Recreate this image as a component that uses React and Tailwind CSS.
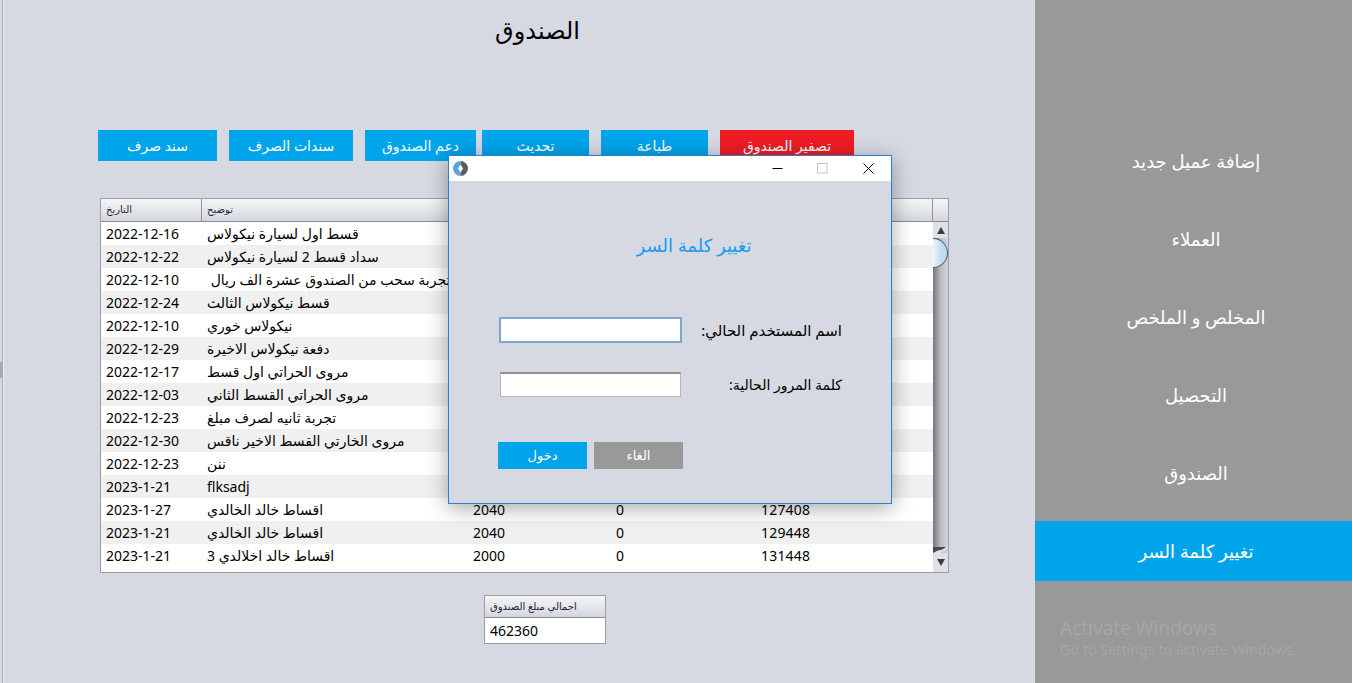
const font = { fontFamily: '"Noto Sans","DejaVu Sans",sans-serif' };

const rows = [
  ["2022-12-16", "قسط اول لسيارة نيكولاس"],
  ["2022-12-22", "سداد قسط 2 لسيارة نيكولاس"],
  ["2022-12-10", "\u00a0تجربة سحب من الصندوق عشرة الف ريال"],
  ["2022-12-24", "قسط نيكولاس الثالث"],
  ["2022-12-10", "نيكولاس خوري"],
  ["2022-12-29", "دفعة نيكولاس الاخيرة"],
  ["2022-12-17", "مروى الحراتي اول قسط"],
  ["2022-12-03", "مروى الحراتي القسط الثاني"],
  ["2022-12-23", "تجربة ثانيه لصرف مبلغ"],
  ["2022-12-30", "مروى الخارتي القسط الاخير ناقس"],
  ["2022-12-23", "ننن"],
  ["2023-1-21", "flksadj"],
  ["2023-1-27", "اقساط خالد الخالدي", "2040", "0", "127408"],
  ["2023-1-21", "اقساط خالد الخالدي", "2040", "0", "129448"],
  ["2023-1-21", "اقساط خالد اخلالدي 3", "2000", "0", "131448"],
];

const nav = ["إضافة عميل جديد", "العملاء", "المخلص و الملخص", "التحصيل", "الصندوق", "تغيير كلمة السر"];

const headGrad = "bg-gradient-to-b from-[#f4f5f7] via-[#e6e7ea] to-[#d3d6de]";

function Btn({ w, color = "bg-[#00a4ea]", ml = "", children }) {
  return (
    <div className={`${w} ${ml} ${color} h-[31px] flex items-center justify-center text-white text-[14px]`}>
      {children}
    </div>
  );
}

export default function App() {
  return (
    <div style={font} className="relative w-[1352px] h-[683px] overflow-hidden flex bg-[#d6d9e2]">
      {/* main area */}
      <main className="w-[1035px] h-full flex">
        <div className="w-[2px] h-full flex flex-col">
          <div className="h-[362px]" />
          <div className="h-[16px] bg-[#a8abb5]" />
        </div>
        <div className="w-px h-full bg-[#a6a8ae]" />
        <div className="w-px h-full bg-[#eef0f4]" />
        <div className="flex-1 flex flex-col">
          <h1 className="h-[60px] ml-[-4px] flex items-center justify-center text-[24px] font-normal text-black pl-[40px]">الصندوق</h1>
          <div className="mt-[70px] ml-[94px] flex">
            <Btn w="w-[119px]">سند صرف</Btn>
            <Btn w="w-[124px]" ml="ml-[12px]">سندات الصرف</Btn>
            <Btn w="w-[111px]" ml="ml-[12px]">دعم الصندوق</Btn>
            <Btn w="w-[107px]" ml="ml-[6px]">تحديث</Btn>
            <Btn w="w-[107px]" ml="ml-[12px]">طباعة</Btn>
            <Btn w="w-[134px]" ml="ml-[12px]" color="bg-[#ee1c25]">تصفير الصندوق</Btn>
          </div>

          {/* table */}
          <div className="mt-[37px] ml-[96px] w-[849px] h-[375px] border border-[#9a9ca6] flex flex-col bg-white">
            <div className={`h-[23px] flex border-b border-[#868a99] text-[10px] text-[#1f1f3a] ${headGrad}`}>
              <div className="w-[101px] pl-[5px] pt-[3px] border-r border-[#8f929c]">التاريخ</div>
              <div className="w-[731px] pl-[5px] pt-[3px] border-r border-[#8f929c]">توضيح</div>
              <div className="flex-1" />
            </div>
            <div className="flex-1 flex min-h-0">
              <div className="w-[832px] flex flex-col text-[14px] text-black">
                {rows.map((r, i) => (
                  <div key={i} className={`h-[23px] shrink-0 flex items-center whitespace-nowrap ${i % 2 ? "bg-[#f0f0f0]" : "bg-white"}`}>
                    <div className="w-[100px] pl-[5px]">{r[0]}</div>
                    <div className="w-[266px] pl-[6px]">{r[1]}</div>
                    <div className="w-[143px] pl-[6px]">{r[2]}</div>
                    <div className="w-[145px] pl-[6px]">{r[3]}</div>
                    <div className="flex-1 pl-[6px] tracking-[0.2px]">{r[4]}</div>
                  </div>
                ))}
              </div>
              {/* scrollbar */}
              <div className="flex-1 flex flex-col bg-gradient-to-r from-[#75767c] via-[#b9bac0] to-[#d4d6dc]">
                <div className="h-[16px] flex items-center justify-center bg-[#dfe1e6]">
                  <svg width="8" height="7" viewBox="0 0 8 7"><path d="M4 0 8 7H0Z" fill="#3a3c40" /></svg>
                </div>
                <div className="h-[30px] rounded-r-full border border-l-0 border-[#46627c] bg-gradient-to-r from-[#f0f6fb] via-[#c8e0f0] to-[#bcd7ea]" />
                <div className="flex-1" />
                <svg className="block" width="15" height="6" viewBox="0 0 15 6">
                  <path d="M0 0H15V0C13 3 10 5 7 6H0Z" fill="#dfe1e6" />
                  <path d="M0 0H13C11 2 9 3 5 3.5L0 6Z" fill="#4a4b50" />
                </svg>
                <div className="h-[19px] flex items-center justify-center bg-[#dfe1e6]">
                  <svg width="8" height="7" viewBox="0 0 8 7"><path d="M0 0H8L4 7Z" fill="#3a3c40" /></svg>
                </div>
              </div>
            </div>
          </div>

          {/* total */}
          <div className="mt-[22px] ml-[480px] w-[122px] h-[49px] border border-[#9a9ca6] flex flex-col bg-white">
            <div className={`h-[22px] border-b border-[#868a99] flex items-center pl-[5px] text-[10px] text-[#1f1f3a] ${headGrad}`}>
              اجمالي مبلغ الصندوق
            </div>
            <div className="flex-1 flex items-center pl-[5px] text-[14px] text-black">462360</div>
          </div>
        </div>
      </main>

      {/* sidebar */}
      <aside className="relative w-[317px] h-full bg-[#999999] pt-[131px] flex flex-col gap-[18px]">
        {nav.map((n, i) => (
          <div key={n} className={`h-[60px] flex items-center justify-center pl-[5px] text-white text-[18px] ${i === 5 ? "bg-[#00a4ea]" : ""}`}>
            {n}
          </div>
        ))}
        <div className="absolute left-[25px] top-[617px] text-[#a6a6a6] leading-none">
          <div className="text-[19px] h-[23px] flex items-center">Activate Windows</div>
          <div className="text-[14.3px] h-[21px] flex items-center">Go to Settings to activate Windows.</div>
        </div>
      </aside>

      {/* modal */}
      <div className="absolute left-[448px] top-[155px] w-[444px] h-[349px] border border-[#2a7fd0] bg-[#d6d9e2] shadow-[0_4px_20px_rgba(0,0,0,0.35)] flex flex-col">
        <div className="h-[25px] shrink-0 bg-white flex items-center justify-between pl-[4px]">
          <svg width="15" height="15" viewBox="0 0 15 15">
            <path d="M7.5 0a7.5 7.5 0 0 0 0 15Z" fill="#5aa5e0" />
            <path d="M7.5 0a7.5 7.5 0 0 1 0 15Z" fill="#5a5f66" />
            <path d="M7.5 3.5 10 7.5 7.5 11.5 5 7.5Z" fill="#fff" />
          </svg>
          <div className="flex items-center h-full">
            <div className="w-[45px] flex justify-center">
              <svg width="11" height="11" viewBox="0 0 11 11"><path d="M0.5 5.5h10" stroke="#000" strokeWidth="1" /></svg>
            </div>
            <div className="w-[45px] flex justify-center">
              <svg width="11" height="11" viewBox="0 0 11 11"><rect x="0.5" y="0.5" width="9.5" height="9.5" fill="none" stroke="#c4c4c4" /></svg>
            </div>
            <div className="w-[46px] flex justify-center">
              <svg width="11" height="11" viewBox="0 0 11 11"><path d="M0.5 0.5l10 10M10.5 0.5l-10 10" stroke="#000" strokeWidth="1" /></svg>
            </div>
          </div>
        </div>
        <div className="flex-1 flex flex-col">
          <div className="mt-[50px] h-[28px] flex items-center justify-center text-[18px] text-[#1a9bf0] pl-[48px]">تغيير كلمة السر</div>
          <div className="mt-[58px] flex items-center h-[26px]">
            <div className="ml-[50px] w-[183px] h-[26px] bg-white border-2 border-[#7ea6cf]" />
            <div dir="rtl" className="w-[160px] text-right text-[15px] text-black">اسم المستخدم الحالي:</div>
          </div>
          <div className="mt-[29px] flex items-center h-[25px]">
            <div className="ml-[51px] w-[181px] h-[25px] bg-white border border-[#b4b4b4] border-t-2 border-t-[#8e8e8e]" />
            <div dir="rtl" className="w-[161px] text-right text-[14px] text-black">كلمة المرور الحالية:</div>
          </div>
          <div className="mt-[45px] ml-[49px] flex gap-[7px]">
            <div className="w-[89px] h-[27px] bg-[#00a4ea] text-white text-[13px] flex items-center justify-center">دخول</div>
            <div className="w-[89px] h-[27px] bg-[#999999] text-white text-[13px] flex items-center justify-center">الغاء</div>
          </div>
        </div>
      </div>
    </div>
  );
}
